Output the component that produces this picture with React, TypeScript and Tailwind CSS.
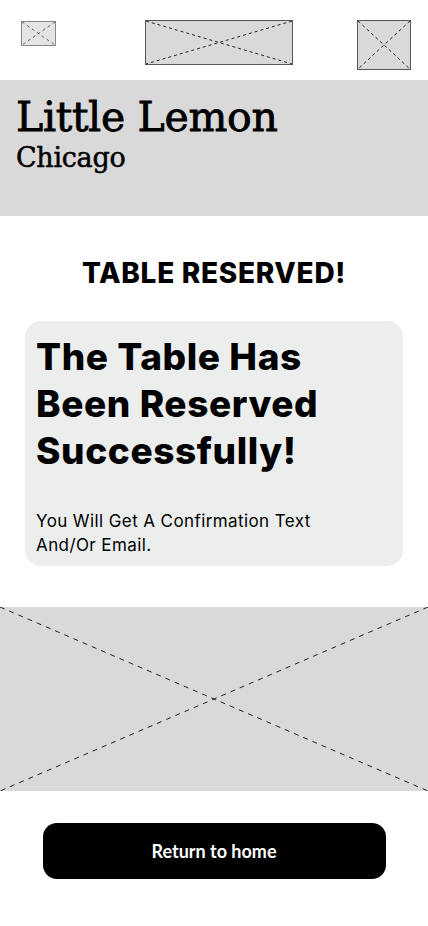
import React from "react";

function Placeholder({ className, dash = "3 3", border = true }: { className: string; dash?: string; border?: boolean }) {
  return (
    <div className={`relative shrink-0 bg-[#d9d9d9] ${border ? "border border-[#555]" : ""} ${className}`}>
      <svg className="absolute inset-0 h-full w-full" viewBox="0 0 100 100" preserveAspectRatio="none">
        <line x1="0" y1="0" x2="100" y2="100" stroke="#222" strokeWidth="1" strokeDasharray={dash} vectorEffect="non-scaling-stroke" />
        <line x1="100" y1="0" x2="0" y2="100" stroke="#222" strokeWidth="1" strokeDasharray={dash} vectorEffect="non-scaling-stroke" />
      </svg>
    </div>
  );
}

export default function App() {
  return (
    <div className="w-[428px] min-h-[926px] bg-white flex flex-col">
      <div className="h-[80px] flex items-start pl-[21px] pt-[20px]">
        <Placeholder className="w-[35px] h-[25px] mt-[1px] opacity-70" />
        <Placeholder className="w-[148px] h-[45px] ml-[89px]" />
        <Placeholder className="w-[54px] h-[50px] ml-[64px]" />
      </div>
      <div className="h-[136px] bg-[#d9d9d9] px-[16px] pt-[12px]">
        <div className="text-[41px] leading-[50px] text-black tracking-[-0.3px] [-webkit-text-stroke:0.8px_black]" style={{ fontFamily: '"DejaVu Serif", serif' }}>Little Lemon</div>
        <div className="text-[27px] leading-[32px] text-black tracking-[-0.3px] [-webkit-text-stroke:0.5px_black]" style={{ fontFamily: '"DejaVu Serif", serif' }}>Chicago</div>
      </div>
      <div className="flex flex-col items-center pt-[40px]">
        <div className="text-[28px] leading-[34px] font-extrabold tracking-[0.7px] text-black" style={{ fontFamily: 'Inter, sans-serif' }}>TABLE RESERVED!</div>
      </div>
      <div className="mx-[25px] mt-[31px] rounded-[16px] bg-[#eceeee] px-[11px] pt-[12px] pb-[9px]" style={{ fontFamily: 'Inter, sans-serif' }}>
        <div className="w-[300px] text-[37px] leading-[47px] font-extrabold tracking-[0.6px] text-black">The Table Has Been Reserved Successfully!</div>
        <div className="w-[310px] mt-[35px] text-[17px] leading-[24px] text-black tracking-[0.4px]">You Will Get A Confirmation Text And/Or Email.</div>
      </div>
      <Placeholder className="mt-[41px] h-[184px] w-full" dash="5 5" border={false} />
      <div className="flex justify-center pt-[32px]">
        <button className="w-[343px] h-[56px] rounded-[14px] bg-black text-white text-[18px] font-bold" style={{ fontFamily: 'Lato, sans-serif' }}>Return to home</button>
      </div>
    </div>
  );
}
